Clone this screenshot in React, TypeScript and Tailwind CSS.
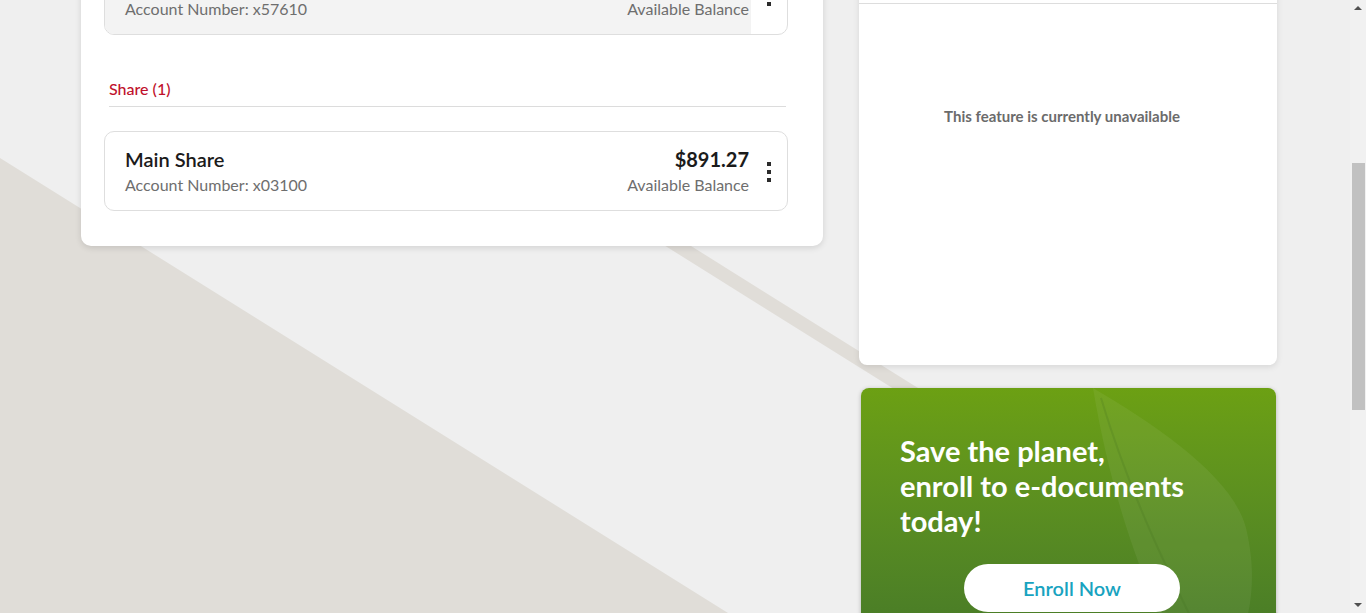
import React from 'react';

interface AccountRowProps {
  name: string;
  accountNumber: string;
  amount: string;
  highlighted?: boolean;
}

const Kebab: React.FC = () => (
  <div className="flex flex-col items-center gap-[4px]">
    <div className="w-[4px] h-[4px] bg-[#2b2b2b]" />
    <div className="w-[4px] h-[4px] bg-[#2b2b2b]" />
    <div className="w-[4px] h-[4px] bg-[#2b2b2b]" />
  </div>
);

const AccountRow: React.FC<AccountRowProps> = ({ name, accountNumber, amount, highlighted }) => (
  <div className="flex h-[80px] rounded-[10px] border border-[#dedede] bg-white overflow-hidden">
    <div className={`flex-1 flex justify-between pl-[20px] pr-[2px] pt-[15px] ${highlighted ? 'bg-[#f3f3f3]' : ''}`}>
      <div className="flex flex-col gap-[3px]">
        <span className="text-[20px] leading-[25px] font-semibold text-[#1b1b1b]">{name}</span>
        <span className="text-[16px] leading-[20px] text-[#6e6e6e]">{accountNumber}</span>
      </div>
      <div className="flex flex-col items-end gap-[3px]">
        <span className="text-[20px] leading-[25px] font-bold text-[#1b1b1b]">{amount}</span>
        <span className="text-[16px] leading-[20px] text-[#6e6e6e]">Available Balance</span>
      </div>
    </div>
    <div className="w-[36px] flex items-center justify-center pt-[1px]">
      <Kebab />
    </div>
  </div>
);

const Background: React.FC = () => (
  <svg className="absolute inset-0 w-full h-full" viewBox="0 0 1366 613" preserveAspectRatio="none">
    <rect width="1366" height="613" fill="#efefef" />
    <polygon points="0,158 728,613 0,613" fill="#e0ddd8" />
    <polygon points="0,-170 1366,684 1366,668 0,-186" fill="#e0ddd8" />
  </svg>
);

const Scrollbar: React.FC = () => (
  <div className="absolute top-0 right-0 w-[16px] h-full bg-[#f1f1f1] flex flex-col items-center">
    <div className="mt-[6px] w-0 h-0 border-l-[4px] border-r-[4px] border-b-[4px] border-l-transparent border-r-transparent border-b-[#505050]" />
    <div className="mt-[153px] w-[13px] ml-[1px] h-[247px] bg-[#c1c1c1]" />
    <div className="mt-auto mb-[6px] w-0 h-0 border-l-[4px] border-r-[4px] border-t-[4px] border-l-transparent border-r-transparent border-t-[#505050]" />
  </div>
);

export default function App() {
  return (
    <div className="relative w-full h-[613px] overflow-hidden font-['Lato',sans-serif]">
      <Background />
      <Scrollbar />

      <div className="relative flex items-start pl-[81px] gap-[36px]">
        {/* Accounts card */}
        <div className="w-[742px] mt-[-65px] bg-white rounded-[10px] shadow-[0_2px_6px_rgba(0,0,0,0.12)] pl-[23px] pr-[35px] pt-[20px] pb-[35px]">
          <AccountRow name="Everyday Checking" accountNumber="Account Number: x57610" amount="$0.00" highlighted />

          <div className="mt-[44px] ml-[5px] mr-[2px] pb-[7px] border-b border-[#dcdcdc]">
            <span className="block text-[16px] leading-[20px] font-medium text-[#c0102c]">Share (1)</span>
          </div>

          <div className="mt-[24px]">
            <AccountRow name="Main Share" accountNumber="Account Number: x03100" amount="$891.27" />
          </div>
        </div>

        {/* Right column */}
        <div className="w-[418px] flex flex-col">
          <div className="mt-[-39px] bg-white rounded-[8px] shadow-[0_2px_6px_rgba(0,0,0,0.1)]">
            <div className="h-[43px] border-b border-[#dddddd]" />
            <div className="h-[361px] pt-[100px] text-center">
              <span className="text-[15px] leading-[20px] font-bold text-[#6b6b6b] pr-[12px]">This feature is currently unavailable</span>
            </div>
          </div>

          <div className="relative mt-[23px] ml-[2px] mr-[1px] h-[270px] rounded-[8px] overflow-hidden bg-gradient-to-b from-[#6ca013] to-[#457828] shadow-[0_1px_4px_rgba(0,0,0,0.25)]">
            <svg className="absolute inset-0 w-full h-full" viewBox="0 0 415 270">
              <path d="M232 0 C300 40 372 90 385 140 C398 195 388 235 372 270 L318 270 C285 200 252 120 232 0 Z" fill="#ffffff" fillOpacity="0.06" />
              <path d="M240 10 C270 110 310 190 350 270" stroke="#3f6e1f" strokeOpacity="0.2" strokeWidth="2" fill="none" />
            </svg>
            <div className="relative pl-[39px] pt-[45px]">
              <h2 className="text-[29px] leading-[35px] font-bold text-white">
                Save the planet,
                <br />
                enroll to e-documents
                <br />
                today!
              </h2>
              <button className="mt-[26px] ml-[64px] w-[216px] h-[48px] rounded-full bg-white text-[20px] font-semibold text-[#18a3c0]">
                Enroll Now
              </button>
            </div>
          </div>
        </div>
      </div>
    </div>
  );
}
